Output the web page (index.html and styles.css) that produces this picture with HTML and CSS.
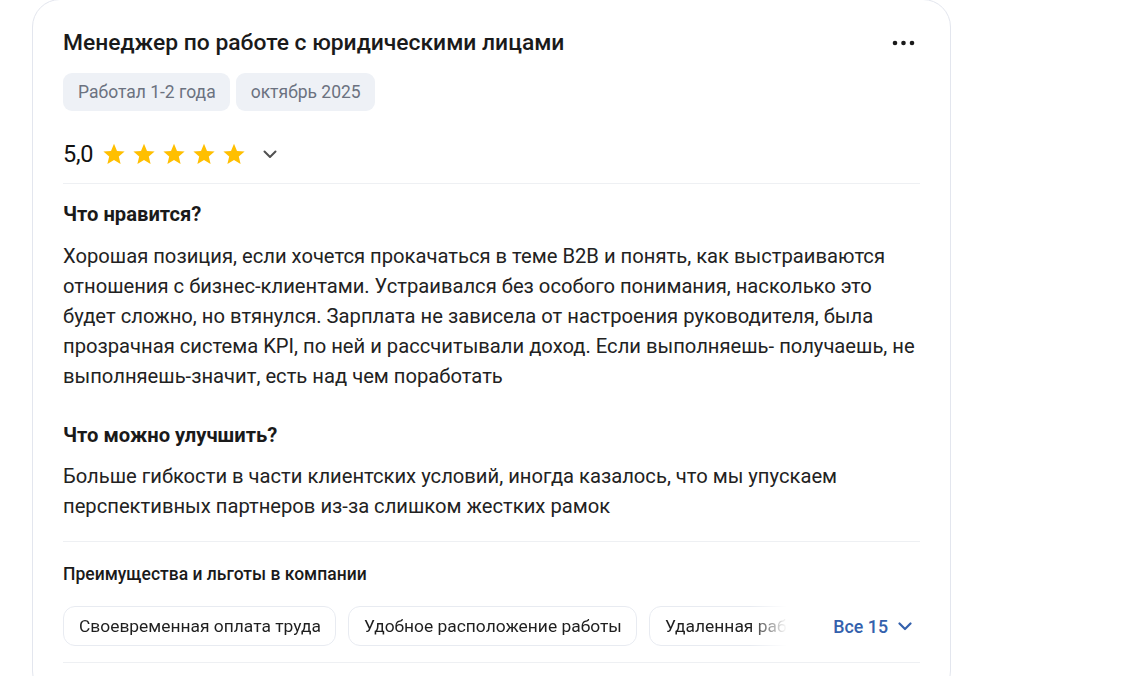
FILE: index.html
```html
<!DOCTYPE html>
<html lang="ru">
<head>
<meta charset="utf-8">
<link rel="stylesheet" href="styles.css">
</head>
<body>
<div class="page">
  <article class="card">
    <header class="card-head">
      <h1 class="title">Менеджер по работе с юридическими лицами</h1>
      <button class="more" aria-label="Ещё">
        <svg width="24" height="6" viewBox="0 0 24 6"><circle cx="3" cy="3" r="2.3"/><circle cx="11.5" cy="3" r="2.3"/><circle cx="20" cy="3" r="2.3"/></svg>
      </button>
    </header>
    <div class="tags">
      <span class="tag">Работал 1-2 года</span>
      <span class="tag">октябрь 2025</span>
    </div>
    <div class="rating">
      <span class="score">5,0</span>
      <span class="stars">
        <svg class="star" viewBox="0 0 24 24"><path d="M12 1.8l3 7.1 7.6.6-5.8 5 1.8 7.5L12 18l-6.6 4 1.8-7.5-5.8-5 7.6-.6z"/></svg>
        <svg class="star" viewBox="0 0 24 24"><path d="M12 1.8l3 7.1 7.6.6-5.8 5 1.8 7.5L12 18l-6.6 4 1.8-7.5-5.8-5 7.6-.6z"/></svg>
        <svg class="star" viewBox="0 0 24 24"><path d="M12 1.8l3 7.1 7.6.6-5.8 5 1.8 7.5L12 18l-6.6 4 1.8-7.5-5.8-5 7.6-.6z"/></svg>
        <svg class="star" viewBox="0 0 24 24"><path d="M12 1.8l3 7.1 7.6.6-5.8 5 1.8 7.5L12 18l-6.6 4 1.8-7.5-5.8-5 7.6-.6z"/></svg>
        <svg class="star" viewBox="0 0 24 24"><path d="M12 1.8l3 7.1 7.6.6-5.8 5 1.8 7.5L12 18l-6.6 4 1.8-7.5-5.8-5 7.6-.6z"/></svg>
      </span>
      <svg class="chev" width="14" height="9" viewBox="0 0 14 9"><path d="M1.5 1.5L7 7l5.5-5.5"/></svg>
    </div>
    <section class="block">
      <h2 class="block-title">Что нравится?</h2>
      <p class="block-text">Хорошая позиция, если хочется прокачаться в теме B2B и понять, как выстраиваются отношения с бизнес-клиентами. Устраивался без особого понимания, насколько это будет сложно, но втянулся. Зарплата не зависела от настроения руководителя, была прозрачная система KPI, по ней и рассчитывали доход. Если выполняешь- получаешь, не выполняешь-значит, есть над чем поработать</p>
      <h2 class="block-title second">Что можно улучшить?</h2>
      <p class="block-text">Больше гибкости в части клиентских условий, иногда казалось, что мы упускаем перспективных партнеров из-за слишком жестких рамок</p>
    </section>
    <section class="benefits">
      <h3 class="benefits-title">Преимущества и льготы в компании</h3>
      <div class="benefits-row">
        <div class="chips">
          <span class="chip">Своевременная оплата труда</span>
          <span class="chip">Удобное расположение работы</span>
          <span class="chip">Удаленная работа</span>
        </div>
        <button class="all">Все 15
          <svg width="14" height="9" viewBox="0 0 14 9"><path d="M1.5 1.5L7 7l5.5-5.5"/></svg>
        </button>
      </div>
    </section>
  </article>
</div>
</body>
</html>
```
FILE: styles.css
```css
* { box-sizing: border-box; }
html, body { margin: 0; padding: 0; background: #fff; }
body {
  font-family: Roboto, "Noto Sans", Arial, sans-serif;
  color: #1f1f1f;
  overflow: hidden;
}
.page {
  padding-left: 32px;
  margin-top: -1px;
}
.card {
  width: 919px;
  border: 1px solid #e3e6ee;
  border-radius: 28px;
  padding: 29px 30px 0 30px;
  min-height: 700px;
}
.card-head {
  display: flex;
  align-items: center;
  justify-content: space-between;
}
.title {
  margin: 0;
  font-size: 22.85px;
  line-height: 28px;
  font-weight: 500;
  color: #1a1a1a;
}
.more {
  border: 0;
  background: none;
  padding: 0;
  margin-right: 4px;
  display: flex;
  fill: #1a1a1a;
  cursor: pointer;
}
.tags {
  display: flex;
  gap: 6px;
  margin-top: 16px;
}
.tag {
  background: #eef1f6;
  color: #6b7280;
  font-size: 17.5px;
  line-height: 38px;
  padding: 0 14px 0 15px;
  border-radius: 9px;
}
.rating {
  display: flex;
  align-items: center;
  margin-top: 25px;
  height: 36px;
  box-sizing: content-box;
  padding-bottom: 11px;
  border-bottom: 1px solid #eef0f3;
}
.score {
  font-size: 23.5px;
  font-weight: 400;
  color: #111;
  letter-spacing: -0.3px;
}
.stars {
  display: flex;
  gap: 6px;
  margin-left: 9px;
}
.star {
  width: 24px;
  height: 24px;
  fill: #ffbf00;
}
.chev {
  margin-left: 17px;
  fill: none;
  stroke: #505050;
  stroke-width: 2;
  stroke-linecap: round;
  stroke-linejoin: round;
}
.block {
  padding: 18px 0 20px;
  border-bottom: 1px solid #eef0f3;
}
.block-title {
  margin: 0 0 15px;
  font-size: 20.2px;
  line-height: 24px;
  font-weight: 700;
  color: #1a1a1a;
}
.block-title.second {
  margin-top: 32px;
  margin-bottom: 14px;
}
.block-text {
  margin: 0;
  font-size: 20.2px;
  line-height: 30px;
  color: #222;
}
.benefits {
  padding: 20px 0 16px;
  border-bottom: 1px solid #eef0f3;
}
.benefits-title {
  margin: 0 0 20px;
  font-size: 17.5px;
  line-height: 24px;
  font-weight: 500;
  color: #1a1a1a;
}
.benefits-row {
  display: flex;
  align-items: center;
}
.chips {
  flex: 1;
  display: flex;
  gap: 12px;
  overflow: hidden;
  white-space: nowrap;
  -webkit-mask-image: linear-gradient(to right, #000 calc(100% - 45px), transparent calc(100% - 8px));
  mask-image: linear-gradient(to right, #000 calc(100% - 45px), transparent calc(100% - 8px));
}
.chip {
  flex: none;
  border: 1px solid #e8ebf1;
  border-radius: 12px;
  padding: 0 14px 0 15px;
  font-size: 17.4px;
  line-height: 38px;
  color: #1f1f1f;
}
.all {
  flex: none;
  display: flex;
  align-items: center;
  gap: 10px;
  border: 0;
  background: none;
  padding: 0 8px 0 38px;
  font-family: inherit;
  font-size: 17.8px;
  font-weight: 500;
  color: #3461ad;
  cursor: pointer;
}
.all svg {
  fill: none;
  stroke: #3461ad;
  stroke-width: 2.2;
  stroke-linecap: round;
  stroke-linejoin: round;
}
```
